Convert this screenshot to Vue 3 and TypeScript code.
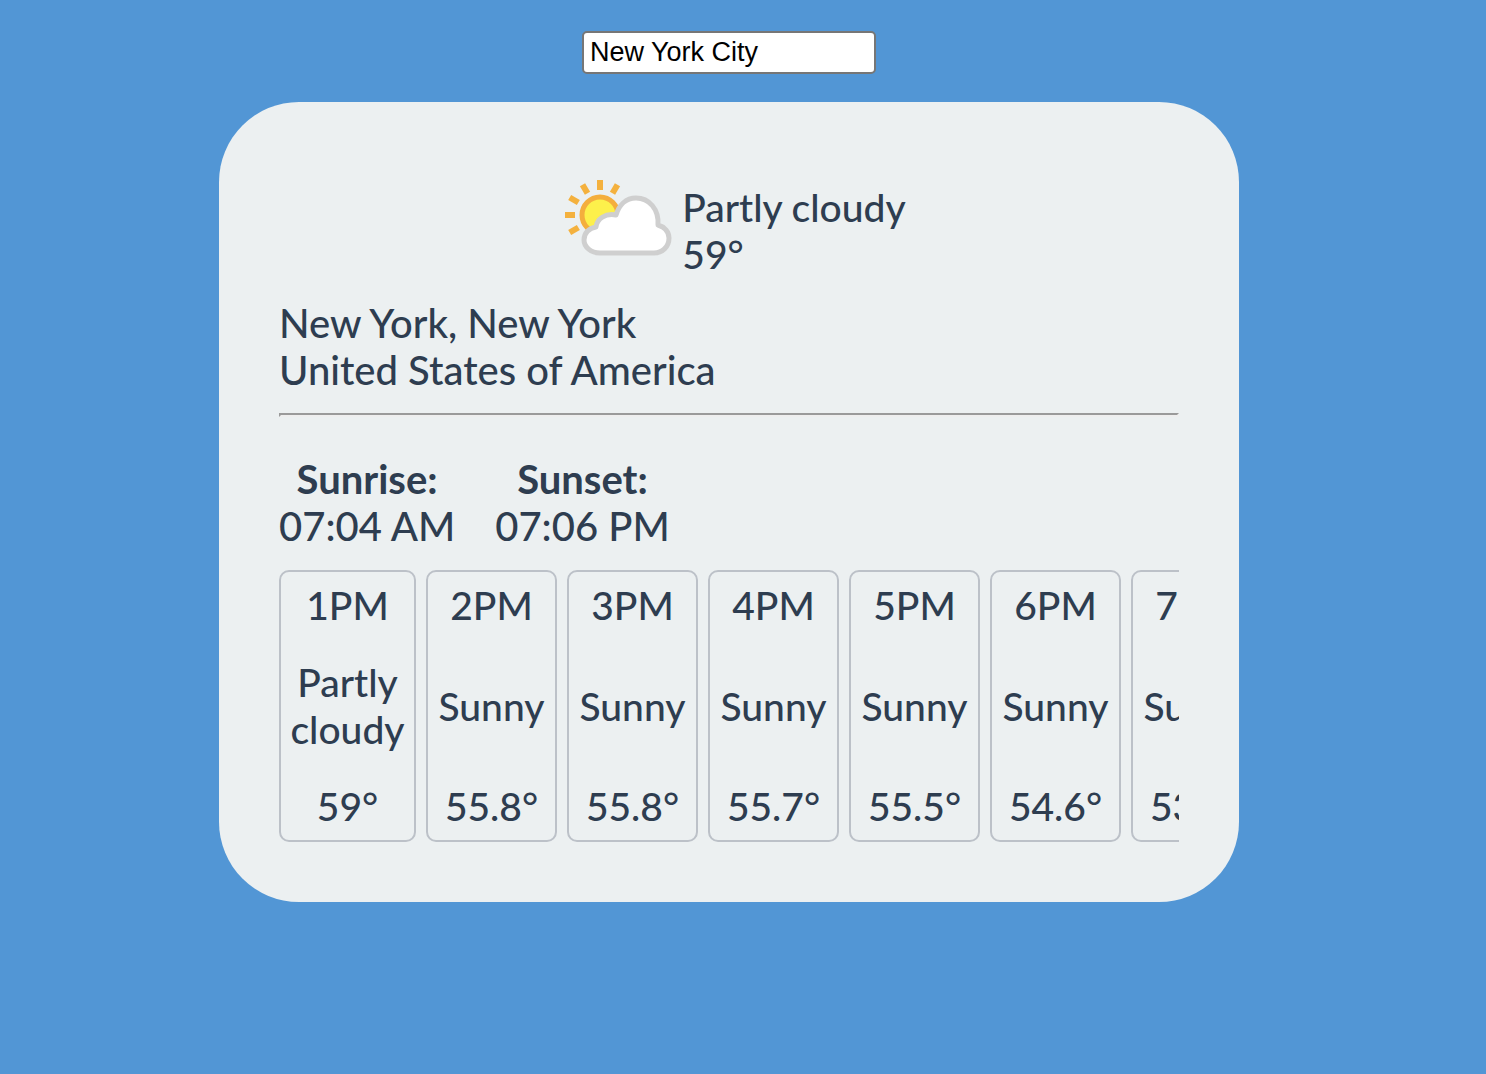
<script setup lang="ts">
import { ref } from 'vue'

interface Hour {
  time: string
  condition: string
  temp: string
}

const city = ref('New York City')

const hours: Hour[] = [
  { time: '1PM', condition: 'Partly cloudy', temp: '59°' },
  { time: '2PM', condition: 'Sunny', temp: '55.8°' },
  { time: '3PM', condition: 'Sunny', temp: '55.8°' },
  { time: '4PM', condition: 'Sunny', temp: '55.7°' },
  { time: '5PM', condition: 'Sunny', temp: '55.5°' },
  { time: '6PM', condition: 'Sunny', temp: '54.6°' },
  { time: '7PM', condition: 'Sunny', temp: '53.2°' },
]

const rayAngles = [-120, -90, -60, -30, 0, 30]
</script>

<template>
  <main class="page">
    <input v-model="city" class="search" type="text" aria-label="City" />

    <section class="card">
      <div class="current">
        <svg class="icon" viewBox="-2 -1 128 128" aria-hidden="true">
          <g stroke="#f4b13e" stroke-width="6">
            <line
              v-for="angle in rayAngles"
              :key="angle"
              x1="46"
              y1="22"
              x2="46"
              y2="12"
              :transform="`rotate(${angle} 46 47)`"
            />
          </g>
          <circle cx="46" cy="47" r="18" fill="#fdf04b" stroke="#f4ae3d" stroke-width="5" />
          <path
            d="M46 85 C37 85 30 79 30 72 C30 65 35 60 42 59 C43 51 51 45 62 47 C65 37 72 30 82 30 C95 30 105 41 104 57 C111 59 115 64 115 70 C115 79 108 85 100 85 Z"
            fill="#fff"
            stroke="#cfcfcf"
            stroke-width="5"
            stroke-linejoin="round"
          />
        </svg>
        <div>
          <div>Partly cloudy</div>
          <div>59°</div>
        </div>
      </div>

      <div class="place">
        <div>New York, New York</div>
        <div>United States of America</div>
      </div>

      <hr class="rule" />

      <div class="sun">
        <div class="sun-item">
          <strong>Sunrise:</strong>
          <span>07:04 AM</span>
        </div>
        <div class="sun-item">
          <strong>Sunset:</strong>
          <span>07:06 PM</span>
        </div>
      </div>

      <div class="hours">
        <div v-for="hour in hours" :key="hour.time" class="hour">
          <span>{{ hour.time }}</span>
          <span>{{ hour.condition }}</span>
          <span>{{ hour.temp }}</span>
        </div>
      </div>
    </section>
  </main>
</template>

<style>
body {
  margin: 0;
  background: #5296d5;
}
</style>

<style scoped>
.page {
  display: flex;
  flex-direction: column;
  align-items: center;
  gap: 28px;
  padding: 31px 28px 60px 0;
  color: #2e3d50;
  font-family: Futura, Lato, sans-serif;
  font-size: 39px;
  font-weight: 500;
  line-height: 47px;
}

.search {
  box-sizing: border-box;
  width: 294px;
  height: 43px;
  padding: 2px 6px;
  border: 2px solid #767676;
  border-radius: 5px;
  background: #fff;
  color: #000;
  font-family: "Liberation Sans", Arial, sans-serif;
  font-size: 27px;
}

.card {
  box-sizing: border-box;
  width: 100%;
  max-width: 1020px;
  padding: 65px 60px 60px;
  border-radius: 80px;
  background: #ecf0f1;
}

.current {
  display: flex;
  justify-content: center;
  align-items: center;
  gap: 2px;
}

.icon {
  width: 128px;
  height: 128px;
}

.place {
  margin-top: 5px;
  font-size: 40px;
}

.rule {
  margin: 19px 0 39px;
  border: 2px solid #eee;
  border-top-color: #9a9a9a;
  border-left-color: #9a9a9a;
}

.sun {
  display: flex;
  gap: 40px;
  font-size: 40px;
}

.sun-item {
  display: flex;
  flex-direction: column;
  align-items: center;
}

.hours {
  display: flex;
  gap: 10px;
  margin-top: 20px;
  overflow: hidden;
}

.hour {
  box-sizing: border-box;
  flex: none;
  display: flex;
  flex-direction: column;
  justify-content: space-between;
  align-items: center;
  gap: 30px;
  width: 131px;
  padding: 10px 9px;
  border: 2px solid #bcc1c8;
  border-radius: 10px;
  text-align: center;
}

.hour:first-child {
  width: 137px;
}
</style>
